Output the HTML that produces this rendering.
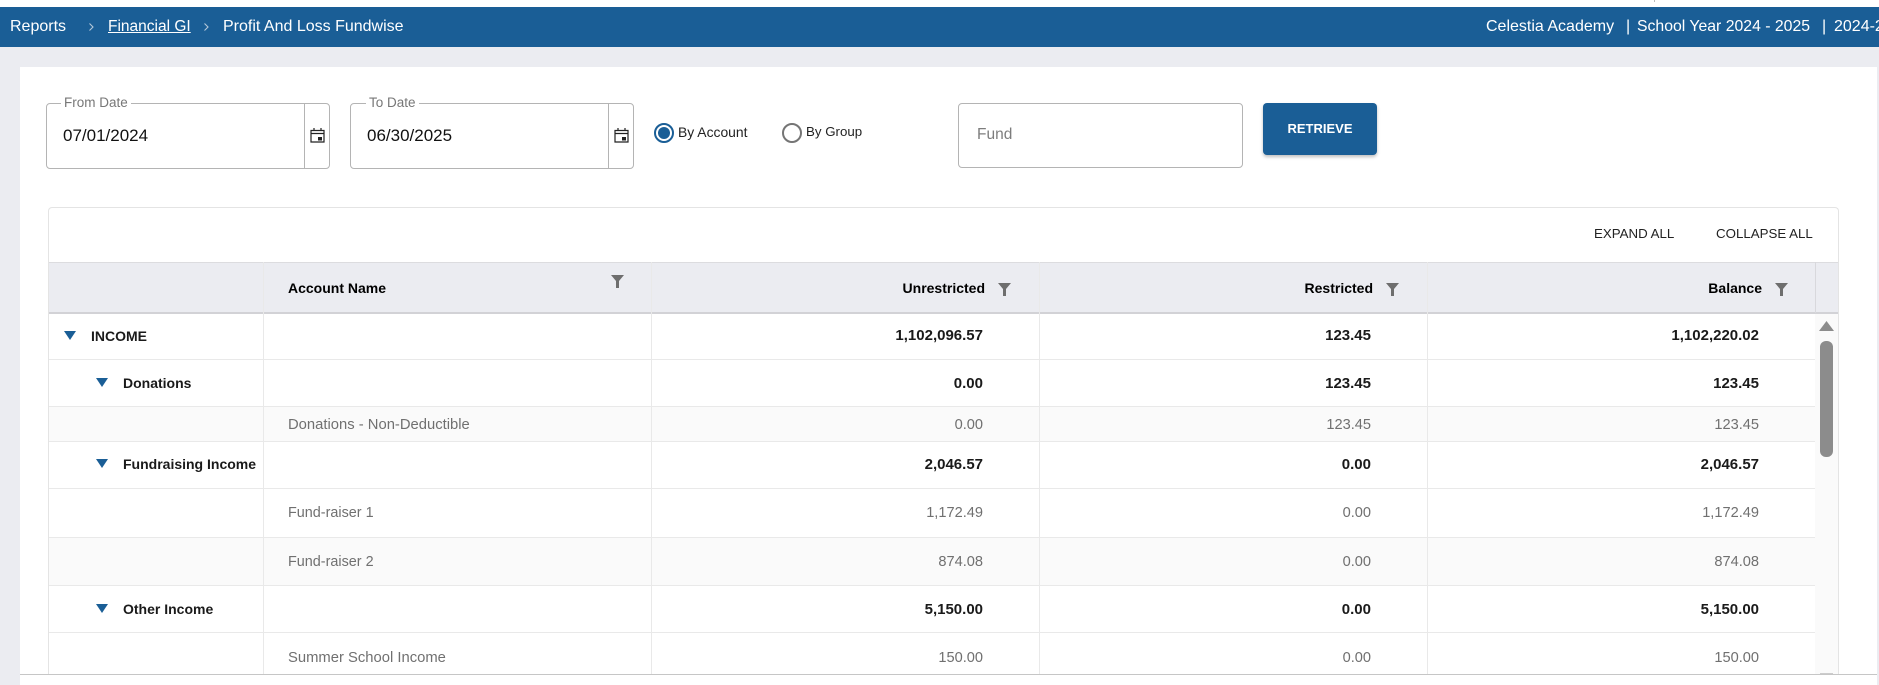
<!DOCTYPE html>
<html><head><meta charset="utf-8"><style>
*{box-sizing:border-box}
html,body{margin:0;padding:0;width:1879px;height:685px;overflow:hidden;background:#fff;font-family:"Liberation Sans",sans-serif}
.a{position:absolute}
.t{position:absolute;white-space:nowrap;line-height:20px;height:20px}
.r{text-align:right}
.b{font-weight:700;color:#1a1a1a;font-size:14px}
.n{font-size:15px;transform:translateY(1px)}
.l{color:#707070;font-size:14.8px;transform:translateY(1px)}
.m{font-size:14.6px}
.tri{position:absolute;width:0;height:0;border-left:6px solid transparent;border-right:6px solid transparent;border-top:9px solid #1a5e96}
.hl{position:absolute;height:1px;background:#e9e9e9}
.vl{position:absolute;width:1px;background:#e9e9e9}
.box{position:absolute;border:1px solid #b4b4b4;border-radius:4px;background:#fff}
</style></head><body>
<div class="a" style="left:1654px;top:0;width:1px;height:2px;background:#bbb"></div>
<div class="a" style="left:0;top:7px;width:1879px;height:40px;background:#1a5e96"></div>
<div class="a" style="left:0;top:47px;width:1879px;height:638px;background:#ebecf1"></div>
<div class="a" style="left:20px;top:67px;width:1857px;height:618px;background:#fff"></div>

<div class="t" style="left:10px;top:17px;color:#fff;font-size:16px">Reports</div>
<svg class="a" style="left:88px;top:22px" width="7" height="10"><path d="M1.5 1.5L5 5L1.5 8.5" fill="none" stroke="#b4c7d8" stroke-width="1.1"/></svg>
<div class="t" style="left:108px;top:17px;color:#fff;font-size:15.5px;text-decoration:underline">Financial GI</div>
<svg class="a" style="left:203px;top:22px" width="7" height="10"><path d="M1.5 1.5L5 5L1.5 8.5" fill="none" stroke="#b4c7d8" stroke-width="1.1"/></svg>
<div class="t" style="left:223px;top:17px;color:#fff;font-size:16px">Profit And Loss Fundwise</div>
<div class="t" style="left:1486px;top:17px;color:#fff;font-size:16px">Celestia Academy</div>
<div class="t" style="left:1626px;top:17px;color:#fff;font-size:16px">|</div>
<div class="t" style="left:1637px;top:17px;color:#fff;font-size:15.8px">School Year 2024 - 2025</div>
<div class="t" style="left:1822px;top:17px;color:#fff;font-size:16px">|</div>
<div class="t" style="left:1834px;top:17px;color:#fff;font-size:16px;width:45px;overflow:hidden">2024-2025</div>

<!-- From date -->
<div class="box" style="left:46px;top:103px;width:284px;height:66px"></div>
<div class="a" style="left:304px;top:103px;width:1px;height:66px;background:#b4b4b4"></div>
<div class="t" style="left:61px;top:93px;background:#fff;padding:0 3px;color:#777;font-size:13.5px">From Date</div>
<div class="t" style="left:63px;top:126px;color:#111;font-size:17px">07/01/2024</div>
<svg class="a" style="left:310px;top:127px" width="15" height="16" viewBox="0 0 15 16"><path d="M1 3.5H14V15H1ZM1 6.5H14M4 1V4M11 1V4" fill="none" stroke="#222" stroke-width="1.2"/><rect x="8" y="10" width="4" height="3.5" fill="#222"/></svg>

<!-- To date -->
<div class="box" style="left:350px;top:103px;width:284px;height:66px"></div>
<div class="a" style="left:608px;top:103px;width:1px;height:66px;background:#b4b4b4"></div>
<div class="t" style="left:366px;top:93px;background:#fff;padding:0 3px;color:#777;font-size:13.5px">To Date</div>
<div class="t" style="left:367px;top:126px;color:#111;font-size:17px">06/30/2025</div>
<svg class="a" style="left:614px;top:127px" width="15" height="16" viewBox="0 0 15 16"><path d="M1 3.5H14V15H1ZM1 6.5H14M4 1V4M11 1V4" fill="none" stroke="#222" stroke-width="1.2"/><rect x="8" y="10" width="4" height="3.5" fill="#222"/></svg>

<!-- radios -->
<svg class="a" style="left:653px;top:122px" width="22" height="22"><circle cx="11" cy="11" r="9" fill="none" stroke="#1a5e96" stroke-width="2"/><circle cx="11" cy="11" r="6" fill="#1a5e96"/></svg>
<div class="t" style="left:678px;top:122px;color:#222;font-size:13.9px">By Account</div>
<svg class="a" style="left:781px;top:122px" width="22" height="22"><circle cx="11" cy="11" r="9" fill="none" stroke="#757575" stroke-width="2"/></svg>
<div class="t" style="left:806px;top:122px;color:#222;font-size:13.3px">By Group</div>

<!-- fund -->
<div class="box" style="left:958px;top:103px;width:285px;height:65px"></div>
<div class="t" style="left:977px;top:125px;color:#7d7d7d;font-size:15.5px">Fund</div>
<div class="a" style="left:1263px;top:103px;width:114px;height:52px;background:#1a5e96;border-radius:4px;box-shadow:0 2px 3px rgba(0,0,0,.25);color:#fff;font-size:13px;font-weight:700;text-align:center;line-height:52px">RETRIEVE</div>

<!-- table -->
<div class="a" style="left:48px;top:207px;width:1791px;height:468px;border:1px solid #e4e4e4;border-bottom:0;border-radius:4px 4px 0 0;background:#fff"></div>
<div class="t" style="left:1594px;top:224px;color:#222;font-size:13.3px">EXPAND ALL</div>
<div class="t" style="left:1716px;top:224px;color:#222;font-size:13.3px">COLLAPSE ALL</div>

<div class="a" style="left:49px;top:262px;width:1789px;height:52px;background:#ebecf1;border-top:1px solid #dcdcdf;border-bottom:2px solid #d2d2d6"></div>

<!-- row backgrounds -->
<div class="a" style="left:49px;top:406px;width:1766px;height:35px;background:#fafafa"></div>
<div class="a" style="left:49px;top:537px;width:1766px;height:48px;background:#fafafa"></div>

<!-- scrollbar -->
<div class="a" style="left:1815px;top:314px;width:23px;height:360px;background:#fafafa"></div>
<svg class="a" style="left:1819px;top:320px" width="15" height="12"><path d="M7.5 1L15 11H0Z" fill="#8c8c8c"/></svg>
<div class="a" style="left:1820px;top:341px;width:13px;height:116px;background:#8c8c8c;border-radius:6px"></div>
<div class="a" style="left:1820px;top:673px;width:13px;height:1px;background:#ccc"></div>

<!-- horizontal row lines -->
<div class="hl" style="left:49px;top:359px;width:1766px"></div>
<div class="hl" style="left:49px;top:406px;width:1766px"></div>
<div class="hl" style="left:49px;top:441px;width:1766px"></div>
<div class="hl" style="left:49px;top:488px;width:1766px"></div>
<div class="hl" style="left:49px;top:537px;width:1766px"></div>
<div class="hl" style="left:49px;top:585px;width:1766px"></div>
<div class="hl" style="left:49px;top:632px;width:1766px"></div>

<!-- vertical lines -->
<div class="vl" style="left:263px;top:262px;height:412px"></div>
<div class="vl" style="left:651px;top:262px;height:412px"></div>
<div class="vl" style="left:1039px;top:262px;height:412px"></div>
<div class="vl" style="left:1427px;top:262px;height:412px"></div>
<div class="vl" style="left:1815px;top:262px;height:51px;background:#d8d8dc"></div>

<!-- header text -->
<div class="t" style="left:288px;top:278px;color:#000;font-size:14px;font-weight:700">Account Name</div>
<div class="t r" style="left:785px;top:278px;width:200px;color:#000;font-size:14px;font-weight:700">Unrestricted</div>
<div class="t r" style="left:1173px;top:278px;width:200px;color:#000;font-size:14px;font-weight:700">Restricted</div>
<div class="t r" style="left:1562px;top:278px;width:200px;color:#000;font-size:14px;font-weight:700">Balance</div>
<svg class="a" style="left:611px;top:275px" width="13" height="13"><path d="M0 0H13L8 6V13H5V6Z" fill="#6e6e6e"/></svg>
<svg class="a" style="left:998px;top:283px" width="13" height="13"><path d="M0 0H13L8 6V13H5V6Z" fill="#6e6e6e"/></svg>
<svg class="a" style="left:1386px;top:283px" width="13" height="13"><path d="M0 0H13L8 6V13H5V6Z" fill="#6e6e6e"/></svg>
<svg class="a" style="left:1775px;top:283px" width="13" height="13"><path d="M0 0H13L8 6V13H5V6Z" fill="#6e6e6e"/></svg>

<!-- INCOME -->
<div class="tri" style="left:64px;top:331px"></div>
<div class="t b" style="left:91px;top:326px">INCOME</div>
<div class="t b n r" style="left:783px;top:325px;width:200px">1,102,096.57</div>
<div class="t b n r" style="left:1171px;top:325px;width:200px">123.45</div>
<div class="t b n r" style="left:1559px;top:325px;width:200px">1,102,220.02</div>

<!-- Donations -->
<div class="tri" style="left:96px;top:378px"></div>
<div class="t b" style="left:123px;top:373px">Donations</div>
<div class="t b n r" style="left:783px;top:373px;width:200px">0.00</div>
<div class="t b n r" style="left:1171px;top:373px;width:200px">123.45</div>
<div class="t b n r" style="left:1559px;top:373px;width:200px">123.45</div>

<div class="t l" style="left:288px;top:414px">Donations - Non-Deductible</div>
<div class="t l m r" style="left:783px;top:414px;width:200px">0.00</div>
<div class="t l m r" style="left:1171px;top:414px;width:200px">123.45</div>
<div class="t l m r" style="left:1559px;top:414px;width:200px">123.45</div>

<!-- Fundraising -->
<div class="tri" style="left:96px;top:459px"></div>
<div class="t b" style="left:123px;top:454px">Fundraising Income</div>
<div class="t b n r" style="left:783px;top:454px;width:200px">2,046.57</div>
<div class="t b n r" style="left:1171px;top:454px;width:200px">0.00</div>
<div class="t b n r" style="left:1559px;top:454px;width:200px">2,046.57</div>

<div class="t l" style="left:288px;top:502px;font-size:14.4px">Fund-raiser 1</div>
<div class="t l m r" style="left:783px;top:502px;width:200px">1,172.49</div>
<div class="t l m r" style="left:1171px;top:502px;width:200px">0.00</div>
<div class="t l m r" style="left:1559px;top:502px;width:200px">1,172.49</div>

<div class="t l" style="left:288px;top:551px;font-size:14.4px">Fund-raiser 2</div>
<div class="t l m r" style="left:783px;top:551px;width:200px">874.08</div>
<div class="t l m r" style="left:1171px;top:551px;width:200px">0.00</div>
<div class="t l m r" style="left:1559px;top:551px;width:200px">874.08</div>

<!-- Other -->
<div class="tri" style="left:96px;top:604px"></div>
<div class="t b" style="left:123px;top:599px">Other Income</div>
<div class="t b n r" style="left:783px;top:599px;width:200px">5,150.00</div>
<div class="t b n r" style="left:1171px;top:599px;width:200px">0.00</div>
<div class="t b n r" style="left:1559px;top:599px;width:200px">5,150.00</div>

<div class="t l" style="left:288px;top:647px">Summer School Income</div>
<div class="t l m r" style="left:783px;top:647px;width:200px">150.00</div>
<div class="t l m r" style="left:1171px;top:647px;width:200px">0.00</div>
<div class="t l m r" style="left:1559px;top:647px;width:200px">150.00</div>

<!-- bottom -->
<div class="a" style="left:20px;top:674px;width:1857px;height:1px;background:#c6c6c6"></div>
<div class="a" style="left:20px;top:675px;width:1857px;height:10px;background:#fff"></div>
</body></html>
